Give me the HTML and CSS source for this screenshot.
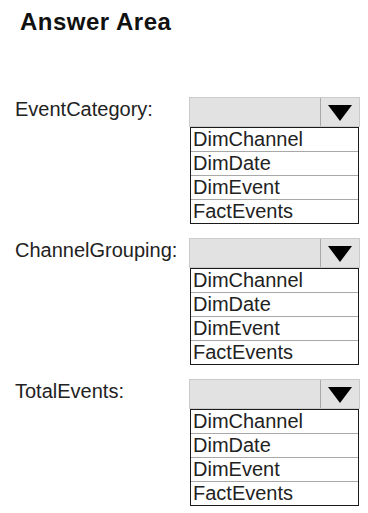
FILE: index.html
```html
<!DOCTYPE html>
<html lang="en">
<head>
  <meta charset="UTF-8" />
  <meta name="viewport" content="width=device-width, initial-scale=1.0"/>
  <title>Answer Area</title>
  <link rel="stylesheet" href="styles.css">
</head>
<body>

  <h1 class="title">Answer Area</h1>

  <div class="answers">
    <div class="field">
      <span class="label">EventCategory:</span>
      <div class="picker">
        <div class="select">
          <span class="value"></span>
          <span class="arrow"><span class="triangle"></span></span>
        </div>
        <ul class="options">
          <li>DimChannel</li>
          <li>DimDate</li>
          <li>DimEvent</li>
          <li>FactEvents</li>
        </ul>
      </div>
    </div>

    <div class="field">
      <span class="label">ChannelGrouping:</span>
      <div class="picker">
        <div class="select">
          <span class="value"></span>
          <span class="arrow"><span class="triangle"></span></span>
        </div>
        <ul class="options">
          <li>DimChannel</li>
          <li>DimDate</li>
          <li>DimEvent</li>
          <li>FactEvents</li>
        </ul>
      </div>
    </div>

    <div class="field">
      <span class="label">TotalEvents:</span>
      <div class="picker">
        <div class="select">
          <span class="value"></span>
          <span class="arrow"><span class="triangle"></span></span>
        </div>
        <ul class="options">
          <li>DimChannel</li>
          <li>DimDate</li>
          <li>DimEvent</li>
          <li>FactEvents</li>
        </ul>
      </div>
    </div>
  </div>

</body>
</html>
```

FILE: styles.css
```css
body {
  margin: 0;
  background: #fff;
  font-family: "Liberation Sans", Arial, sans-serif;
  color: #222;
}
.title {
  margin: 0;
  padding: 8px 0 0 20px;
  font-size: 24px;
  line-height: 27px;
  font-weight: bold;
  letter-spacing: 0.5px;
  color: #111;
}
.answers {
  margin-top: 62px;
  padding-left: 15px;
  display: flex;
  flex-direction: column;
  gap: 14px;
}
.field {
  display: grid;
  grid-template-columns: 174px 171px;
  align-items: start;
}
.label {
  font-size: 20px;
  line-height: 24px;
}
.select {
  display: flex;
  height: 28px;
  background: #e2e2e2;
  border: 1px solid #cbcbcb;
}
.value {
  flex: 1;
}
.arrow {
  width: 38px;
  border-left: 1px solid #a9a9a9;
  display: flex;
  align-items: center;
  justify-content: center;
}
.triangle {
  width: 0;
  height: 0;
  border-left: 12px solid transparent;
  border-right: 12px solid transparent;
  border-top: 16px solid #000;
  margin-top: 1px;
}
.options {
  list-style: none;
  margin: 0 1px 0 1px;
  padding: 0;
  border: 1px solid #1a1a1a;
  background: #fff;
}
.options li {
  font-size: 20px;
  line-height: 23px;
  padding-left: 2px;
  border-bottom: 1px solid #a8a8a8;
}
.options li:last-child {
  border-bottom: none;
}
```
